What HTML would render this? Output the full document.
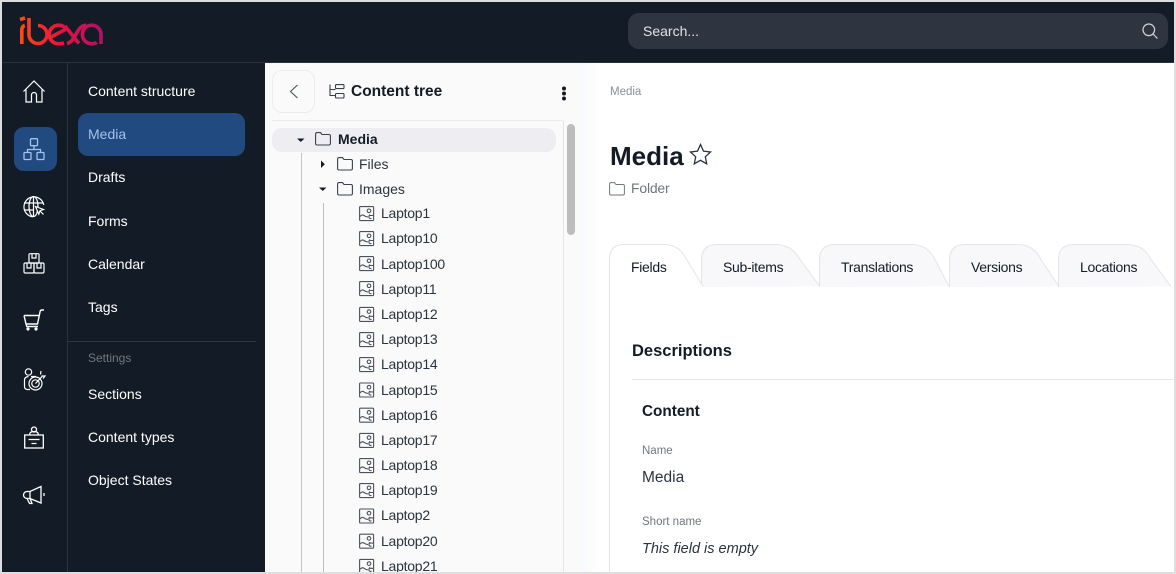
<!DOCTYPE html>
<html><head><meta charset="utf-8"><style>
*{box-sizing:border-box}
html,body{margin:0;padding:0;width:1176px;height:574px;overflow:hidden;background:#fff}
body{font-family:"Liberation Sans","Noto Sans CJK JP",sans-serif;position:relative;color:#131c26}
.a{position:absolute}
.t{position:absolute;white-space:nowrap;line-height:20px;font-size:14px}
.nav{color:#fff;left:88px}
.r{left:381px;font-size:14px;color:#2b3440;letter-spacing:-.25px}
.tb{letter-spacing:-.3px;top:257px}
svg{position:absolute;overflow:visible}
</style></head><body>
<div class="a" style="left:2px;top:2px;width:1172px;height:60px;background:#131c26"></div>
<div class="a" style="left:2px;top:62px;width:263px;height:510px;background:#131c26"></div>
<div class="a" style="left:2px;top:62px;width:1172px;height:1px;background:#2a323d"></div>
<div class="a" style="left:67px;top:63px;width:1px;height:509px;background:#2a323d"></div>
<div class="a" style="left:67px;top:341px;width:189px;height:1px;background:#2f3742"></div>

<svg style="left:0;top:0" width="110" height="60" fill="none">
<defs><linearGradient id="g" gradientUnits="userSpaceOnUse" x1="20" y1="0" x2="102" y2="0"><stop offset="0" stop-color="#ff4a12"/><stop offset=".5" stop-color="#e8123f"/><stop offset="1" stop-color="#ae1268"/></linearGradient></defs>
<g stroke="url(#g)" stroke-width="3.600">
<path d="M21.800 44V30q0-3.500 3-4.500M20 19.500l5-1.500"/>
<path d="M29 18V34.500a9 9 0 1 0 9-9"/>
<path d="M64 43c-2 .5-4 .8-5.500.8a9.300 9.300 0 0 1 0-18.600c3.500 0 6 1.500 7.500 4L51 37"/>
<path d="M65 26l14 17.500M67 43.500c5-1 7-6 10.500-12 2-3.500 4.500-6 8.500-6.300"/>
<path d="M101 44V34.500a9.300 9.300 0 1 0-9.300 9.300c2 0 4-.5 5-1.500"/>
</g></svg>

<div class="a" style="left:628px;top:13px;width:540px;height:36px;border-radius:11px;background:#2e3540"></div>
<div class="t" style="left:643px;top:21px;color:#e0e2e5">Search...</div>
<svg style="left:1142px;top:23px" width="16" height="16" fill="none" stroke="#d0d3d7" stroke-width="1.200"><circle cx="6.800" cy="6.800" r="5.800"/><path d="M11 11l4.500 4.500"/></svg>

<div class="a" style="left:14px;top:127px;width:43px;height:44px;border-radius:10px;background:#214a80"></div>
<div class="a" style="left:78px;top:113px;width:167px;height:43px;border-radius:10px;background:#214a80"></div>

<svg style="left:23px;top:80px" width="22" height="23" fill="none" stroke="#fff" stroke-width="1.200"><path d="M.5 11.500L11 1l10.500 10.500M3 9.500V22h5.500v-7a2.500 2.500 0 0 1 5 0v7H19V9.500"/></svg>
<svg style="left:23px;top:138px" width="22" height="23" fill="none" stroke="#a3c1ea" stroke-width="1.300"><rect x="7.500" y=".7" width="7" height="7" rx=".8"/><rect x="1" y="14.500" width="7" height="7" rx=".8"/><rect x="14" y="14.500" width="7" height="7" rx=".8"/><path d="M11 8v3.500M4.500 14.500v-3h13v3"/></svg>
<svg style="left:23px;top:196px" width="22" height="22" fill="none" stroke="#fff" stroke-width="1.200"><path d="M20.800 9A10 10 0 1 0 10 20.800"/><ellipse cx="10.500" cy="10.500" rx="4.500" ry="10"/><path d="M1 7h19M1 14h9M10.500 1v19"/><path d="M12.500 10.500l8 3-3.500 1.200-1.200 3.500zM17 15l3.500 3.500" fill="#131c26"/></svg>
<svg style="left:23px;top:253px" width="22" height="21" fill="none" stroke="#fff" stroke-width="1.200"><rect x="6" y=".7" width="10" height="9.300" rx="1"/><rect x="1" y="10" width="10" height="10" rx="1.200"/><rect x="11" y="10" width="10" height="10" rx="1.200"/><path d="M9 1v4h4V1M4 10v5h4v-5M14 10v5h4v-5"/></svg>
<svg style="left:23px;top:309px" width="22" height="22" fill="none" stroke="#fff" stroke-width="1.400"><path d="M1 6.500h15.500M1 6.500l2 8.500h11.500l2.500-12q.2-2 2-2H21M3 15l.8 2.500H15"/><circle cx="5" cy="20" r=".9" fill="#fff"/><circle cx="13" cy="20" r=".9" fill="#fff"/></svg>
<svg style="left:23px;top:368px" width="22" height="24" fill="none" stroke="#fff" stroke-width="1.200"><circle cx="5.500" cy="4" r="3.200"/><path d="M7 21.500H4.500q-3 0-3-3V12q0-3 4-3.500M13 8.500h-5"/><circle cx="12.500" cy="15.500" r="6.500"/><circle cx="12.500" cy="15.500" r="3.700"/><path d="M12.500 15.500L20 7.500M17.500 6.500l.5-3.500M18.500 8h3.500l-2 2.500"/></svg>
<svg style="left:24px;top:426px" width="20" height="24" fill="none" stroke="#fff" stroke-width="1.300"><circle cx="10" cy="3.500" r="2.500"/><path d="M5.500 9c0-2.500 2-3.500 4.500-3.500s4.500 1 4.500 3.500"/><rect x=".7" y="9" width="18.600" height="13"/><path d="M4.500 13.500h11M7.500 17.500h5"/></svg>
<svg style="left:23px;top:485px" width="22" height="20" fill="none" stroke="#fff" stroke-width="1.300"><path d="M18 1.500L7 6.500H4a3.500 3.500 0 0 0 0 7h3l11 4.500zM7 6.500v7M4 13.500l2.500 5H9l-2-5M21 8v3"/></svg>

<div class="t nav" style="top:81px">Content structure</div>
<div class="t" style="left:88px;top:124px;color:#a3c1ea">Media</div>
<div class="t nav" style="top:167px">Drafts</div>
<div class="t nav" style="top:211px">Forms</div>
<div class="t nav" style="top:254px">Calendar</div>
<div class="t nav" style="top:297px">Tags</div>
<div class="t" style="left:88px;top:348px;color:#71767e;font-size:12px">Settings</div>
<div class="t nav" style="top:384px">Sections</div>
<div class="t nav" style="top:427px">Content types</div>
<div class="t nav" style="top:470px">Object States</div>

<div class="a" style="left:265px;top:63px;width:315px;height:509px;background:#fafafa"></div>
<div class="a" style="left:580px;top:63px;width:22px;height:509px;background:linear-gradient(90deg,#f8f9fd,#fff)"></div>
<div class="a" style="left:272px;top:70px;width:43px;height:43px;border:1px solid #ecedf0;border-radius:10px;background:#fafafa"></div>
<svg style="left:289px;top:84px" width="10" height="15" fill="none" stroke="#4a525d" stroke-width="1.100"><path d="M8.500 1L1.500 7.500l7 6.500"/></svg>
<svg style="left:329px;top:84px" width="16" height="15" fill="none" stroke="#39414c" stroke-width="1.100"><rect x="6.500" y=".6" width="8.500" height="4" rx="1"/><rect x="6.500" y="9.500" width="8.500" height="4.500" rx="1"/><path d="M1 .5V11.500h5.500M1 5.500h5.500"/></svg>
<div class="t" style="left:351px;top:82px;font-size:15.500px;font-weight:700;color:#131c26">Content tree</div>
<svg style="left:561px;top:86px" width="6" height="15" fill="#131c26"><circle cx="3" cy="2.500" r="2"/><circle cx="3" cy="7.500" r="2"/><circle cx="3" cy="12.500" r="2"/></svg>
<div class="a" style="left:272px;top:120px;width:291px;height:1px;background:#ececee"></div>
<div class="a" style="left:563px;top:121px;width:1px;height:451px;background:#e6e6e8"></div>
<div class="a" style="left:567px;top:124px;width:8px;height:111px;border-radius:4px;background:#bdbdbd"></div>
<div class="a" style="left:272px;top:128px;width:284px;height:24px;border-radius:10px;background:#eeeef2"></div>
<div class="a" style="left:301px;top:153px;width:1px;height:419px;background:#c4c4c4"></div>
<div class="a" style="left:323px;top:203px;width:1px;height:369px;background:#bdbdbd"></div>
<svg style="left:297px;top:136px" width="8" height="8" fill="#131c26"><path d="M0 2.500h7.500L3.750 6z"/></svg>
<svg style="left:320px;top:160px" width="6" height="9" fill="#131c26"><path d="M1 .5v7.500L4.800 4.250z"/></svg>
<svg style="left:319px;top:185px" width="8" height="8" fill="#131c26"><path d="M0 2.500h7.500L3.750 6z"/></svg>
<svg style="left:315px;top:132px" width="16" height="14" fill="none" stroke="#39414c" stroke-width="1.100"><path d="M.6 2q0-1.400 1.400-1.400h3.500L7 2.500h7q1.400 0 1.400 1.400V11.500q0 1.500-1.400 1.500H2q-1.400 0-1.400-1.500z"/></svg>
<svg style="left:337px;top:157px" width="16" height="14" fill="none" stroke="#39414c" stroke-width="1.100"><path d="M.6 2q0-1.400 1.400-1.400h3.500L7 2.500h7q1.400 0 1.400 1.400V11.500q0 1.500-1.400 1.500H2q-1.400 0-1.400-1.500z"/></svg>
<svg style="left:337px;top:182px" width="16" height="14" fill="none" stroke="#39414c" stroke-width="1.100"><path d="M.6 2q0-1.400 1.400-1.400h3.500L7 2.500h7q1.400 0 1.400 1.400V11.500q0 1.500-1.400 1.500H2q-1.400 0-1.400-1.500z"/></svg>
<div class="t" style="left:338px;top:129px;font-weight:700;color:#131c26">Media</div>
<div class="t" style="left:359px;top:154px;color:#2b3440">Files</div>
<div class="t" style="left:359px;top:179px;color:#2b3440">Images</div>

<svg style="left:0;top:0" width="1176" height="574" fill="none" stroke="#4a525d" stroke-width="1.100">
<defs><g id="im"><rect x=".6" y=".6" width="14" height="14" rx=".8"/><circle cx="10" cy="4.800" r="1.800"/><path d="M1 10.500q2-2.500 4-1t4 1.500M11 8.500q-1.500 1.500-1 3t2.500 1M10.500 9.500h4"/></g></defs>
<use href="#im" x="359" y="206"/><use href="#im" x="359" y="231"/><use href="#im" x="359" y="256"/><use href="#im" x="359" y="281"/><use href="#im" x="359" y="306.800"/><use href="#im" x="359" y="332"/><use href="#im" x="359" y="357"/><use href="#im" x="359" y="382.400"/><use href="#im" x="359" y="407.600"/><use href="#im" x="359" y="432.800"/><use href="#im" x="359" y="458"/><use href="#im" x="359" y="483"/><use href="#im" x="359" y="508.400"/><use href="#im" x="359" y="533.600"/><use href="#im" x="359" y="558.800"/>
</svg>
<div class="t r" style="top:203px">Laptop1</div>
<div class="t r" style="top:228px">Laptop10</div>
<div class="t r" style="top:254px">Laptop100</div>
<div class="t r" style="top:279px">Laptop11</div>
<div class="t r" style="top:304px">Laptop12</div>
<div class="t r" style="top:329px">Laptop13</div>
<div class="t r" style="top:354px">Laptop14</div>
<div class="t r" style="top:380px">Laptop15</div>
<div class="t r" style="top:405px">Laptop16</div>
<div class="t r" style="top:430px">Laptop17</div>
<div class="t r" style="top:455px">Laptop18</div>
<div class="t r" style="top:480px">Laptop19</div>
<div class="t r" style="top:505px">Laptop2</div>
<div class="t r" style="top:531px">Laptop20</div>
<div class="t r" style="top:556px">Laptop21</div>

<div class="t" style="left:610px;top:82px;font-size:11.500px;line-height:21px;color:#8a8f96">Media</div>
<div class="t" style="left:610px;top:140px;font-size:26px;line-height:32px;font-weight:700;color:#131c26">Media</div>
<svg style="left:689px;top:143px" width="23" height="22" fill="none" stroke="#2b3440" stroke-width="1.300"><path d="M11.500 1.500l3 6.700 7 .8-5.200 4.800 1.400 7-6.200-3.500-6.200 3.500 1.400-7L1.500 9l7-.8z"/></svg>
<svg style="left:609px;top:182px" width="16" height="14" fill="none" stroke="#71767e" stroke-width="1"><path d="M.6 2q0-1.400 1.400-1.400h3.500L7 2.500h7q1.400 0 1.400 1.400V11.500q0 1.500-1.400 1.500H2q-1.400 0-1.400-1.500z"/></svg>
<div class="t" style="left:631px;top:178px;color:#71767e;letter-spacing:-.2px">Folder</div>

<svg style="left:0;top:0" width="1176" height="574">
<g fill="#f8f8fa" stroke="#e4e5ec" stroke-width="1">
<path d="M701.500 287V260q0-15.500 15.500-15.500h58q17 0 25 15l20 27"/>
<path d="M819.500 287V260q0-15.500 15.500-15.500h76q17 0 24 15l14 27"/>
<path d="M949.500 287V260q0-15.500 15.500-15.500h52q17 0 24 15l18 27"/>
<path d="M1058.500 287V260q0-15.500 15.500-15.500h53q17 0 24 15l20 27"/>
</g>
<path d="M609.500 574V259q0-14.500 14.500-14.500h40q15 0 22 14l17 28.500H1174V574z" fill="#fff" stroke="none"/>
<path d="M609.500 574V259q0-14.500 14.500-14.500h40q15 0 22 14l17 28" fill="none" stroke="#e4e5ec"/>
</svg>
<div class="t tb" style="left:631px">Fields</div>
<div class="t tb" style="left:723px">Sub-items</div>
<div class="t tb" style="left:841px">Translations</div>
<div class="t tb" style="left:971px">Versions</div>
<div class="t tb" style="left:1080px">Locations</div>

<div class="t" style="left:632px;top:341px;font-size:16.500px;font-weight:700">Descriptions</div>
<div class="a" style="left:632px;top:379px;width:542px;height:1px;background:#e4e5ec"></div>
<div class="t" style="left:642px;top:402px;font-size:15.300px;font-weight:700">Content</div>
<div class="t" style="left:642px;top:441px;font-size:11.500px;color:#71767e">Name</div>
<div class="t" style="left:642px;top:468px;font-size:15.500px;color:#2b3440">Media</div>
<div class="t" style="left:642px;top:512px;font-size:11.500px;color:#71767e">Short name</div>
<div class="t" style="left:642px;top:539px;font-size:14.500px;font-style:italic;color:#2b3440">This field is empty</div>

<div class="a" style="left:0;top:0;width:1176px;height:2px;background:#dedede"></div>
<div class="a" style="left:0;top:572px;width:1176px;height:2px;background:#dedede"></div>
<div class="a" style="left:0;top:0;width:2px;height:574px;background:#dedede"></div>
<div class="a" style="left:1174px;top:0;width:2px;height:574px;background:#dedede"></div>
</body></html>
